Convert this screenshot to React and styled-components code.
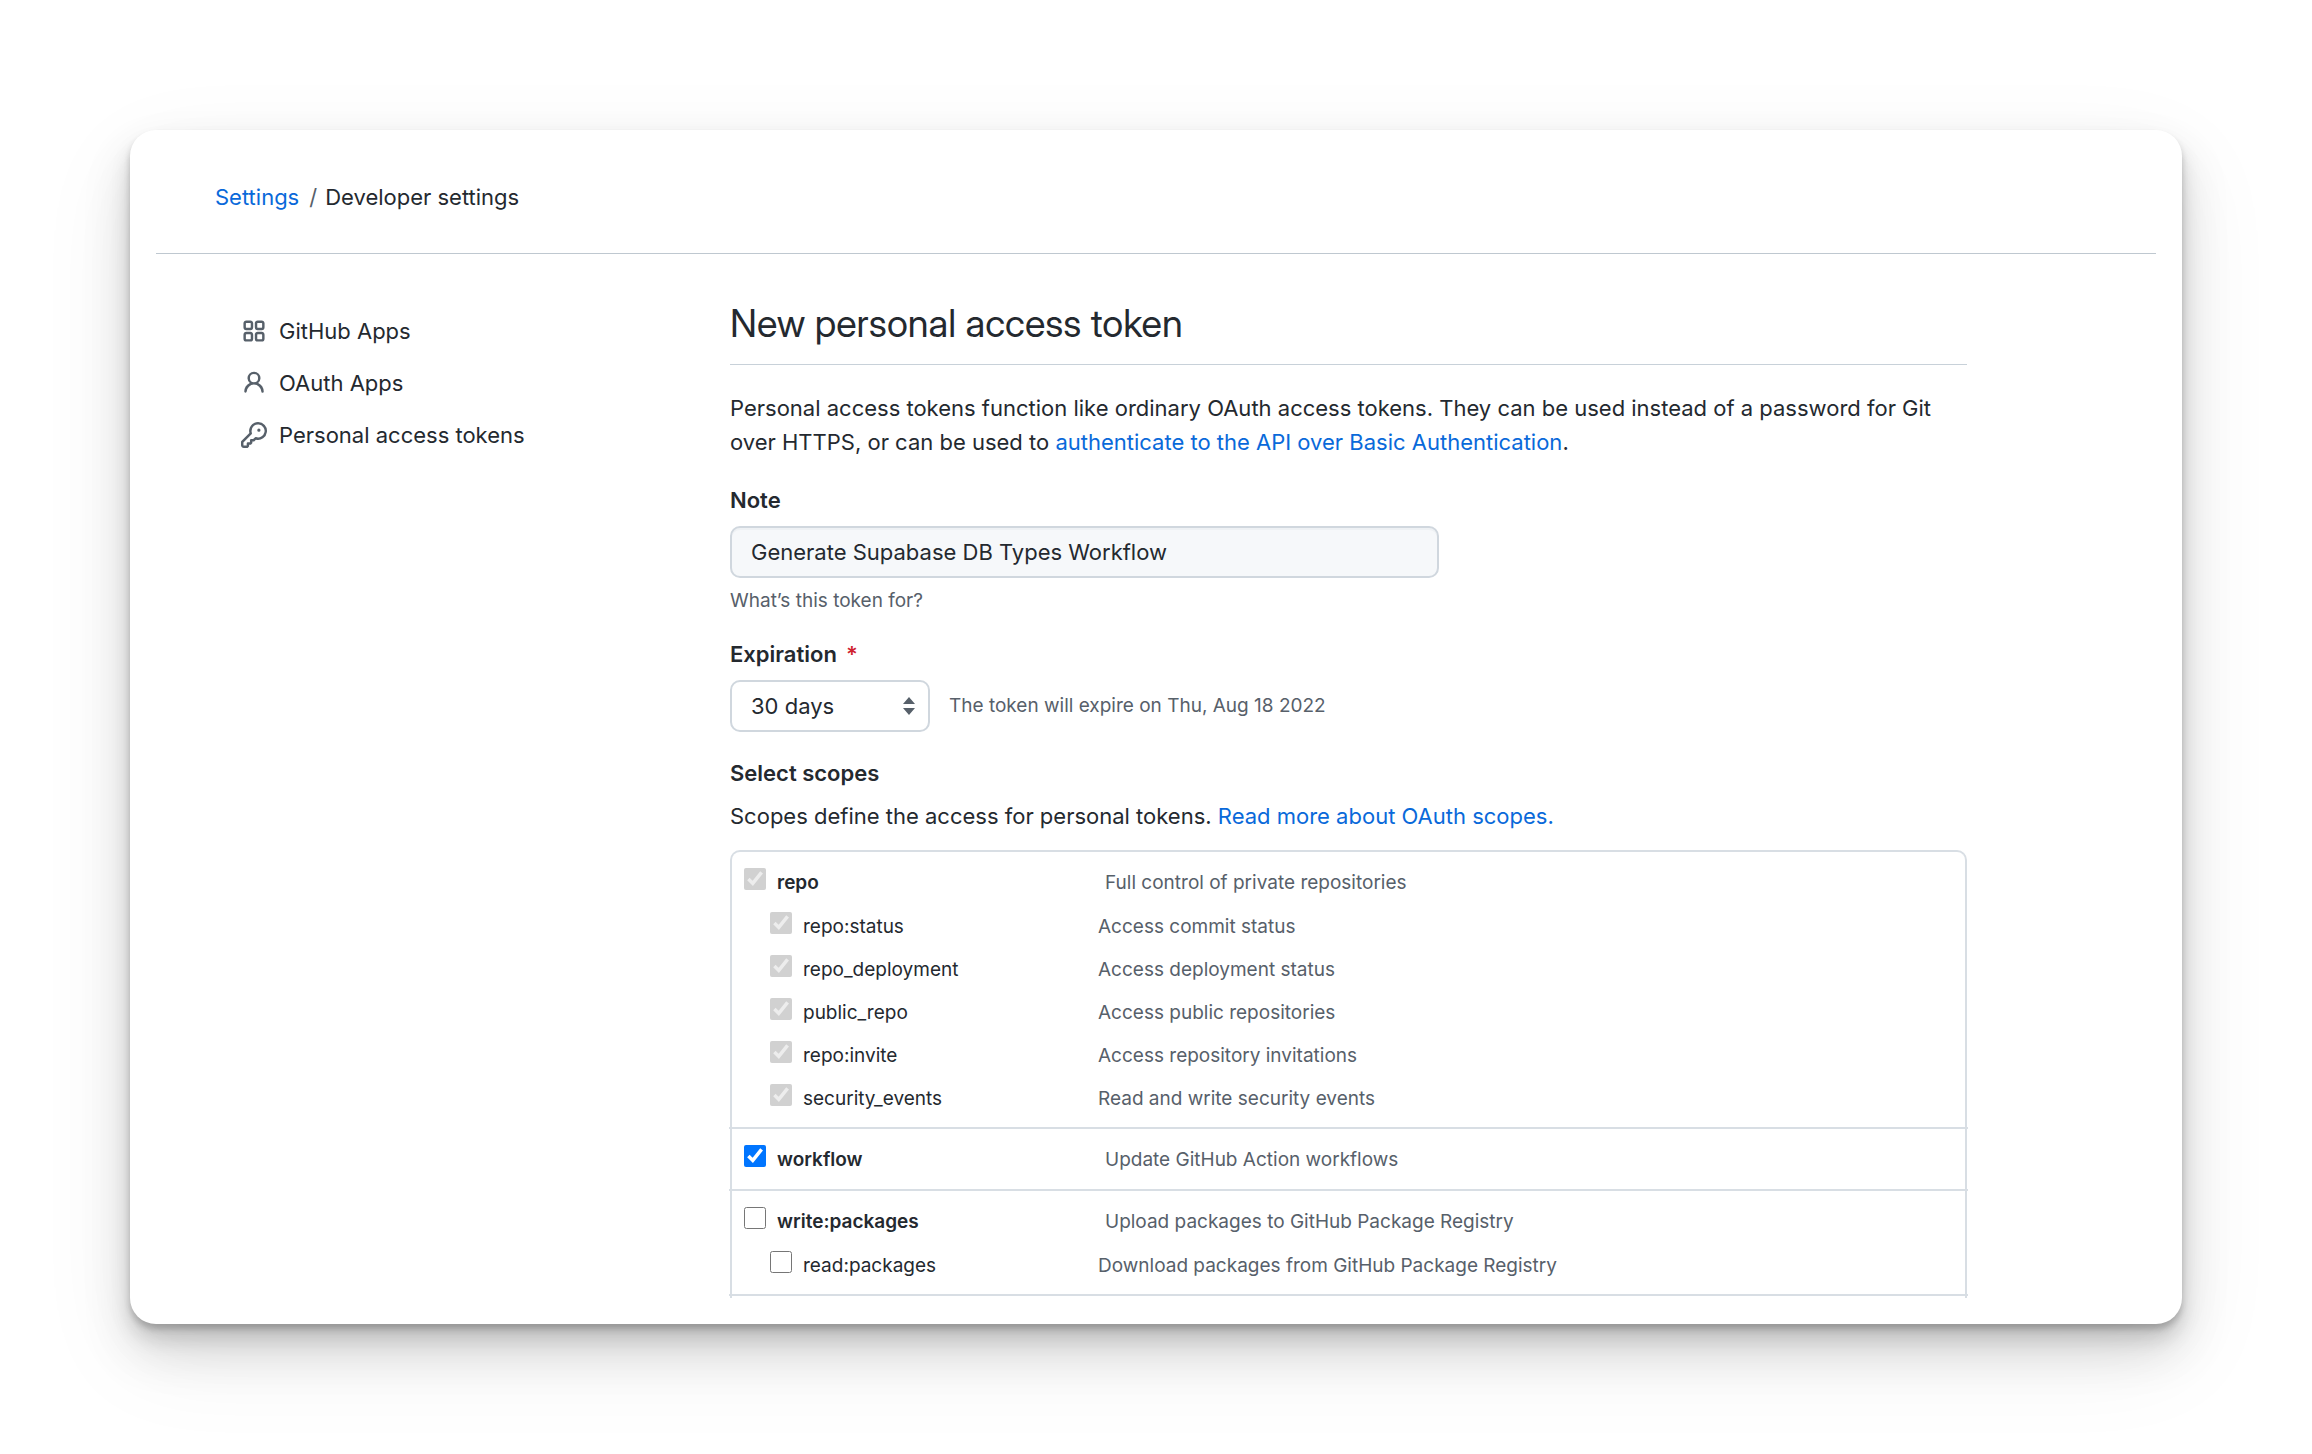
import React from "react";
import styled, { createGlobalStyle } from "styled-components";

const GlobalStyle = createGlobalStyle`
  *, *::before, *::after { box-sizing: border-box; }
  body {
    margin: 0;
    background: #ffffff;
    color: #24292f;
    font-family: Inter, "Liberation Sans", sans-serif;
    font-size: 22px;
    line-height: 34px;
  }
  h1, h2, p, ul { margin: 0; padding: 0; }
  ul { list-style: none; }
`;

const Page = styled.div`
  padding: 130px;
`;

const Card = styled.div`
  padding: 26px;
  border-radius: 26px;
  background: #ffffff;
  box-shadow:
    0 5px 6px rgba(0, 0, 0, 0.19),
    0 14px 20px rgba(0, 0, 0, 0.13),
    0 26px 50px rgba(0, 0, 0, 0.14),
    0 32px 100px rgba(0, 0, 0, 0.07);
`;

const TopBar = styled.header`
  padding: 24px 59px 39px;
  border-bottom: 1px solid #bfc8d0;
`;

const Crumbs = styled.nav`
  display: flex;
  gap: 8px;
`;

const Slash = styled.span`
  padding-left: 2px;
  color: #57606a;
`;

const Link = styled.a`
  color: #0969da;
  text-decoration: none;
`;

const Columns = styled.div`
  display: grid;
  grid-template-columns: 515px minmax(0, 1fr);
  padding: 44px 189px 0 59px;
`;

const SideNav = styled.nav`
  display: flex;
  flex-direction: column;
  gap: 18px;
  padding: 16px 26px;
`;

const SideLink = styled.a`
  display: flex;
  align-items: center;
  gap: 12px;
  color: #24292f;
  text-decoration: none;
  svg { width: 26px; height: 26px; fill: #57606a; }
`;

const Main = styled.main`
  display: flex;
  flex-direction: column;
`;

const Title = styled.h1`
  padding-bottom: 16px;
  border-bottom: 1px solid #c8d1d9;
  font-family: "Inter Display", Inter, "Liberation Sans", sans-serif;
  font-size: 38px;
  font-weight: 400;
  line-height: 50px;
`;

const Intro = styled.p`
  margin-top: 26px;
`;

const Field = styled.div`
  display: flex;
  flex-direction: column;
  align-items: flex-start;
  gap: 9px;
  margin-top: ${(p) => p.$top}px;
`;

const FieldLabel = styled.label`
  font-weight: 600;
  span { padding-left: 9px; color: #cf222e; }
`;

const TextInput = styled.input`
  width: 709px;
  max-width: 100%;
  height: 52px;
  padding: 0 19px;
  border: 2px solid #d0d7de;
  border-radius: 10px;
  background: #f6f8fa;
  box-shadow: inset 0 2px 0 rgba(208, 215, 222, 0.2);
  color: #24292f;
  font: inherit;
`;

const Hint = styled.p`
  color: #57606a;
  font-size: 19px;
  line-height: 28px;
`;

const Inline = styled.div`
  display: flex;
  align-items: center;
  gap: 19px;
`;

const SelectWrap = styled.div`
  position: relative;
  width: 200px;
  svg {
    position: absolute;
    top: 17px;
    right: 15px;
    fill: #57606a;
    pointer-events: none;
  }
`;

const SelectBox = styled.select`
  display: block;
  width: 100%;
  height: 52px;
  padding: 0 19px;
  appearance: none;
  border: 2px solid #d0d7de;
  border-radius: 10px;
  background: #ffffff;
  color: #24292f;
  font: inherit;
`;

const ScopesTitle = styled.h2`
  margin-top: 24px;
  font-size: 22px;
  font-weight: 600;
`;

const ScopesText = styled.p`
  margin-top: 9px;
`;

const ScopeBox = styled.div`
  margin-top: 17px;
  padding-bottom: 2px;
  border: 2px solid #d8dee4;
  border-bottom: 0;
  border-radius: 10px 10px 0 0;
`;

const ScopeGroup = styled.ul`
  margin: 0 -3px;
  padding: 9px 3px 7px;
  border-bottom: 2px solid #d8dee4;
`;

const ScopeRow = styled.li`
  display: grid;
  grid-template-columns: ${(p) => (p.$child ? "328px" : "361px")} minmax(0, 1fr);
  align-items: center;
  height: ${(p) => (p.$child ? 43 : 44)}px;
  padding-left: ${(p) => (p.$child ? 38 : 12)}px;
  font-size: 19px;
`;

const ScopeName = styled.label`
  display: flex;
  align-items: center;
  gap: 11px;
  font-weight: ${(p) => (p.$child ? 400 : 600)};
`;

const Check = styled.input`
  width: 22px;
  height: 22px;
  margin: 0 0 8px;
`;

const ScopeDesc = styled.span`
  color: #57606a;
`;

const GROUPS = [
  [
    ["repo", "Full control of private repositories", "locked"],
    ["repo:status", "Access commit status", "locked"],
    ["repo_deployment", "Access deployment status", "locked"],
    ["public_repo", "Access public repositories", "locked"],
    ["repo:invite", "Access repository invitations", "locked"],
    ["security_events", "Read and write security events", "locked"],
  ],
  [["workflow", "Update GitHub Action workflows", "on"]],
  [
    ["write:packages", "Upload packages to GitHub Package Registry", "off"],
    ["read:packages", "Download packages from GitHub Package Registry", "off"],
  ],
];

const AppsIcon = () => (
  <svg viewBox="0 0 16 16" aria-hidden="true">
    <path fillRule="evenodd" d="M1.5 3.25c0-.966.784-1.75 1.75-1.75h2.5c.966 0 1.75.784 1.75 1.75v2.5A1.75 1.75 0 015.75 7.5h-2.5A1.75 1.75 0 011.5 5.75v-2.5zM3.25 3a.25.25 0 00-.25.25v2.5c0 .138.112.25.25.25h2.5A.25.25 0 006 5.75v-2.5A.25.25 0 005.75 3h-2.5zM1.5 10.25c0-.966.784-1.75 1.75-1.75h2.5c.966 0 1.75.784 1.75 1.75v2.5a1.75 1.75 0 01-1.75 1.75h-2.5a1.75 1.75 0 01-1.75-1.75v-2.5zM3.25 10a.25.25 0 00-.25.25v2.5c0 .138.112.25.25.25h2.5a.25.25 0 00.25-.25v-2.5a.25.25 0 00-.25-.25h-2.5zM8.5 3.25c0-.966.784-1.75 1.75-1.75h2.5c.966 0 1.75.784 1.75 1.75v2.5a1.75 1.75 0 01-1.75 1.75h-2.5A1.75 1.75 0 018.5 5.75v-2.5zM10.25 3a.25.25 0 00-.25.25v2.5c0 .138.112.25.25.25h2.5a.25.25 0 00.25-.25v-2.5a.25.25 0 00-.25-.25h-2.5zM8.5 10.25c0-.966.784-1.75 1.75-1.75h2.5c.966 0 1.75.784 1.75 1.75v2.5a1.75 1.75 0 01-1.75 1.75h-2.5a1.75 1.75 0 01-1.75-1.75v-2.5zm1.75-.25a.25.25 0 00-.25.25v2.5c0 .138.112.25.25.25h2.5a.25.25 0 00.25-.25v-2.5a.25.25 0 00-.25-.25h-2.5z" />
  </svg>
);

const PersonIcon = () => (
  <svg viewBox="0 0 16 16" aria-hidden="true">
    <path fillRule="evenodd" d="M10.5 5a2.5 2.5 0 11-5 0 2.5 2.5 0 015 0zm.061 3.073a4 4 0 10-5.123 0 6.004 6.004 0 00-3.431 5.142.75.75 0 001.498.07 4.5 4.5 0 018.99 0 .75.75 0 101.498-.07 6.005 6.005 0 00-3.432-5.142z" />
  </svg>
);

const KeyIcon = () => (
  <svg viewBox="0 0 16 16" aria-hidden="true">
    <path fillRule="evenodd" d="M6.5 5.5a4 4 0 112.731 3.795.75.75 0 00-.768.18L7.44 10.5H6.25a.75.75 0 00-.75.75v1.19l-.06.06H4.25a.75.75 0 00-.75.75v1.19l-.06.06H1.75a.25.25 0 01-.25-.25v-1.69l5.024-5.023a.75.75 0 00.181-.768A3.995 3.995 0 016.5 5.5zm4-5.5a5.5 5.5 0 00-5.348 6.788L.22 11.72a.75.75 0 00-.22.53v2C0 15.216.784 16 1.75 16h2a.75.75 0 00.53-.22l.5-.5a.75.75 0 00.22-.53V14h.75a.75.75 0 00.53-.22l.5-.5a.75.75 0 00.22-.53V12h.75a.75.75 0 00.53-.22l.932-.932A5.5 5.5 0 1010.5 0zm.5 6a1 1 0 100-2 1 1 0 000 2z" />
  </svg>
);

function Scope({ scope, child }) {
  const [name, desc, state] = scope;
  return (
    <ScopeRow $child={child}>
      <ScopeName $child={child}>
        <Check type="checkbox" defaultChecked={state !== "off"} disabled={state === "locked"} />
        {name}
      </ScopeName>
      <ScopeDesc>{desc}</ScopeDesc>
    </ScopeRow>
  );
}

export default function App() {
  return (
    <Page>
      <GlobalStyle />
      <Card>
        <TopBar>
          <Crumbs>
            <Link href="#settings">Settings</Link>
            <Slash>/</Slash>
            <span>Developer settings</span>
          </Crumbs>
        </TopBar>
        <Columns>
          <SideNav>
            <SideLink href="#apps"><AppsIcon />GitHub Apps</SideLink>
            <SideLink href="#oauth"><PersonIcon />OAuth Apps</SideLink>
            <SideLink href="#tokens"><KeyIcon />Personal access tokens</SideLink>
          </SideNav>
          <Main>
            <Title>New personal access token</Title>
            <Intro>
              Personal access tokens function like ordinary OAuth access tokens. They can be used
              instead of a password for Git over HTTPS, or can be used to{" "}
              <Link href="#api">authenticate to the API over Basic Authentication</Link>.
            </Intro>
            <Field $top={24}>
              <FieldLabel htmlFor="note">Note</FieldLabel>
              <TextInput id="note" type="text" defaultValue="Generate Supabase DB Types Workflow" />
              <Hint>What’s this token for?</Hint>
            </Field>
            <Field $top={22}>
              <FieldLabel htmlFor="expiration">Expiration<span>*</span></FieldLabel>
              <Inline>
                <SelectWrap>
                  <SelectBox id="expiration" defaultValue="30">
                    <option value="30">30 days</option>
                  </SelectBox>
                  <svg width="12" height="18" viewBox="0 0 12 18" aria-hidden="true">
                    <path d="M6 0 12 7H0zM6 18 0 11h12z" />
                  </svg>
                </SelectWrap>
                <Hint>The token will expire on Thu, Aug 18 2022</Hint>
              </Inline>
            </Field>
            <ScopesTitle>Select scopes</ScopesTitle>
            <ScopesText>
              Scopes define the access for personal tokens.{" "}
              <Link href="#scopes">Read more about OAuth scopes.</Link>
            </ScopesText>
            <ScopeBox>
              {GROUPS.map((group) => (
                <ScopeGroup key={group[0][0]}>
                  {group.map((scope, i) => (
                    <Scope key={scope[0]} scope={scope} child={i > 0} />
                  ))}
                </ScopeGroup>
              ))}
            </ScopeBox>
          </Main>
        </Columns>
      </Card>
    </Page>
  );
}
